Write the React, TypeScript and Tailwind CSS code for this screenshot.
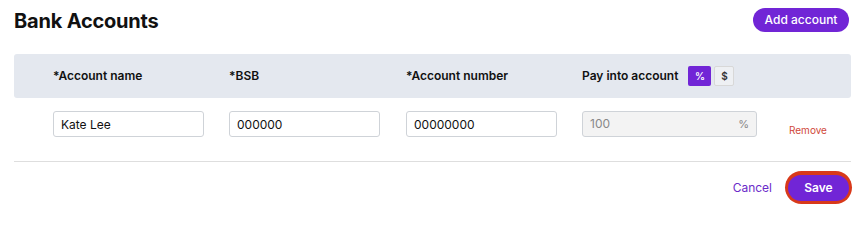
const font = { fontFamily: 'Inter, "Liberation Sans", sans-serif' };

function BankAccounts() {
  return (
    <div className="w-[865px] h-[248px] bg-white px-[14px] text-[#111]" style={font}>
      <div className="flex items-start justify-between pt-[8px]">
        <h1 className="text-[20px] font-bold leading-[24px] mt-[1px] tracking-[-0.2px]">Bank Accounts</h1>
        <button className="h-[24px] w-[96px] mr-[2px] rounded-full bg-[#7125d6] text-white text-[12px] font-medium">
          Add account
        </button>
      </div>

      <div className="mt-[21px] h-[44px] rounded-[3px] bg-[#e4e8ef] flex items-center pl-[39px] text-[12px] font-semibold">
        <div className="w-[176px]">*Account name</div>
        <div className="w-[177px]">*BSB</div>
        <div className="w-[176px]">*Account number</div>
        <div className="flex items-center">
          <span className="mr-[10px]">Pay into account</span>
          <button className="h-[20px] w-[23px] rounded-[2px] bg-[#7125d6] text-white text-[10px] font-semibold">%</button>
          <button className="ml-[3px] h-[20px] w-[20px] rounded-[2px] border border-[#d8d8d8] bg-[#eef0f3] text-[10px] font-semibold text-[#333]">$</button>
        </div>
      </div>

      <div className="flex items-start pl-[39px] pt-[13px] pb-[24px] border-b border-[#dedede] text-[12px]">
        <input
          readOnly
          value="Kate Lee"
          className="h-[26px] w-[151px] mr-[25px] rounded-[3px] border border-[#cfd3d8] px-[7px] outline-none"
        />
        <input
          readOnly
          value="000000"
          className="h-[26px] w-[151px] mr-[26px] rounded-[3px] border border-[#cfd3d8] px-[7px] outline-none"
        />
        <input
          readOnly
          value="00000000"
          className="h-[26px] w-[151px] mr-[25px] rounded-[3px] border border-[#cfd3d8] px-[7px] outline-none"
        />
        <div className="h-[26px] w-[175px] rounded-[3px] border border-[#cfd3d8] bg-[#f3f3f3] flex items-center justify-between px-[7px] text-[#888]">
          <span>100</span>
          <span className="text-[11px]">%</span>
        </div>
        <button className="ml-[32px] mt-[13px] text-[10px] leading-[12px] text-[#d0473a]">Remove</button>
      </div>

      <div className="flex items-center justify-end pt-[9px]">
        <button className="text-[12px] text-[#6b2bc9] mr-[13px]">Cancel</button>
        <div className="rounded-full bg-[#d8391a] p-[3px] mr-[-1px]">
          <button className="h-[26px] w-[61px] rounded-full bg-[#7125d6] text-white text-[12px] font-semibold">Save</button>
        </div>
      </div>
    </div>
  );
}

export default function App() {
  return <BankAccounts />;
}
